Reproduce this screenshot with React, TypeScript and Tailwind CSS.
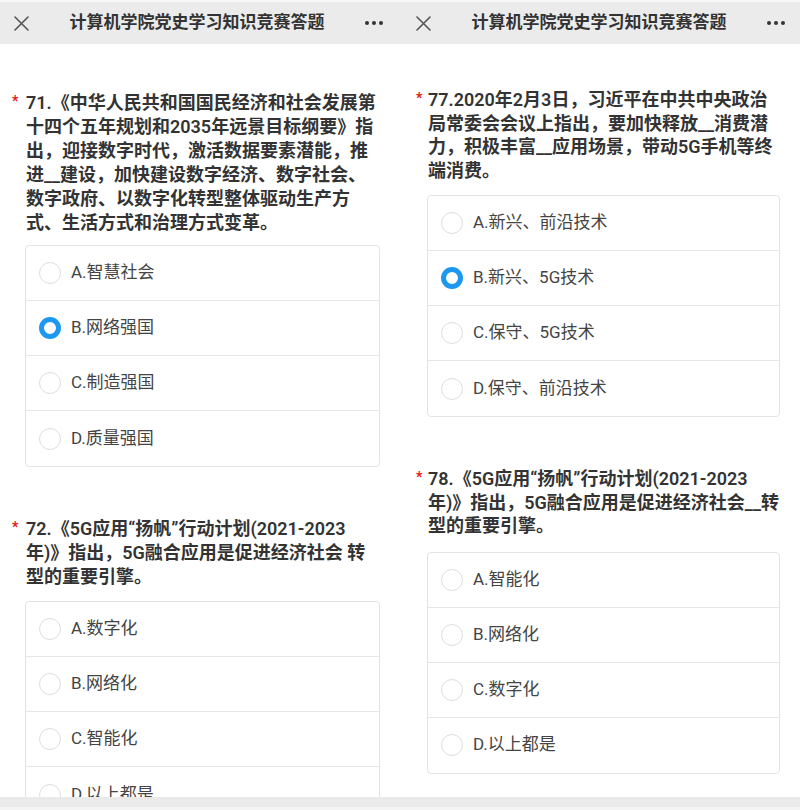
import React from "react";

type Q = {
  lines: string[];
  options: string[];
  selected: number;
  mtText: string;
  mtBox: string;
};

function Header({ pl, pr }: { pl: string; pr: string }) {
  return (
    <div className={`h-[44px] shrink-0 bg-[#ebebeb] border-t-2 border-[#f7f7f7] flex items-center justify-between ${pl} ${pr}`}>
      <svg width="15" height="15" viewBox="0 0 15 15" className="shrink-0">
        <path d="M1 1L14 14M14 1L1 14" stroke="#555" strokeWidth="1.6" strokeLinecap="round" />
      </svg>
      <div className="text-[17px] font-semibold text-[#333]">计算机学院党史学习知识竞赛答题</div>
      <div className="flex items-center gap-[3px] shrink-0">
        <span className="w-[4px] h-[4px] rounded-full bg-[#333]" />
        <span className="w-[4px] h-[4px] rounded-full bg-[#333]" />
        <span className="w-[4px] h-[4px] rounded-full bg-[#333]" />
      </div>
    </div>
  );
}

function Radio({ on }: { on: boolean }) {
  return on ? (
    <span className="w-[22px] h-[22px] rounded-full border-[5px] border-[#1c98f2] bg-white shrink-0" />
  ) : (
    <span className="w-[22px] h-[22px] rounded-full border border-[#dedede] bg-white shrink-0" />
  );
}

function Question({ q, leading, starPad }: { q: Q; leading: string; starPad: string }) {
  return (
    <div>
      <div className={`flex ${q.mtText}`}>
        <span className={`w-[16px] shrink-0 ${starPad} text-[#ee1111] text-[14px] font-bold leading-[20px]`}>*</span>
        <div className={`text-[18px] font-semibold text-[#333] ${leading}`}>
          {q.lines.map((l, i) => (
            <div key={i} className="whitespace-nowrap">{l}</div>
          ))}
        </div>
      </div>
      <div className={`${q.mtBox} ml-[15px] mr-[20px] border border-[#e3e3e3] rounded-[4px] divide-y divide-[#e6e6e6] bg-white`}>
        {q.options.map((o, i) => (
          <div key={i} className="h-[55px] flex items-center pl-[13px] gap-[10px]">
            <Radio on={i === q.selected} />
            <span className="text-[17px] text-[#444]">{o}</span>
          </div>
        ))}
      </div>
    </div>
  );
}

function Panel({ qs, pt, pl, leading, starPad, hpl, hpr }: { qs: Q[]; pt: string; pl: string; leading: string; starPad: string; hpl: string; hpr: string }) {
  return (
    <div className="w-[400px] h-[810px] flex flex-col bg-white">
      <Header pl={hpl} pr={hpr} />
      <div className={`flex-1 overflow-hidden ${pt} ${pl}`}>
        {qs.map((q, i) => (
          <Question key={i} q={q} leading={leading} starPad={starPad} />
        ))}
      </div>
      <div className="h-[13px] shrink-0 bg-[#eaeaea] border-b-[3px] border-[#f4f4f4]" />
    </div>
  );
}

const left: Q[] = [
  {
    lines: [
      "71.《中华人民共和国国民经济和社会发展第",
      "十四个五年规划和2035年远景目标纲要》指",
      "出，迎接数字时代，激活数据要素潜能，推",
      "进__建设，加快建设数字经济、数字社会、",
      "数字政府、以数字化转型整体驱动生产方",
      "式、生活方式和治理方式变革。",
    ],
    options: ["A.智慧社会", "B.网络强国", "C.制造强国", "D.质量强国"],
    selected: 1,
    mtText: "mt-0",
    mtBox: "mt-[10px]",
  },
  {
    lines: [
      "72.《5G应用“扬帆”行动计划(2021-2023",
      "年)》指出，5G融合应用是促进经济社会 转",
      "型的重要引擎。",
    ],
    options: ["A.数字化", "B.网络化", "C.智能化", "D.以上都是"],
    selected: -1,
    mtText: "mt-[50px]",
    mtBox: "mt-[12px]",
  },
];

const right: Q[] = [
  {
    lines: [
      "77.2020年2月3日，习近平在中共中央政治",
      "局常委会会议上指出，要加快释放__消费潜",
      "力，积极丰富__应用场景，带动5G手机等终",
      "端消费。",
    ],
    options: ["A.新兴、前沿技术", "B.新兴、5G技术", "C.保守、5G技术", "D.保守、前沿技术"],
    selected: 1,
    mtText: "mt-0",
    mtBox: "mt-[13px]",
  },
  {
    lines: [
      "78.《5G应用“扬帆”行动计划(2021-2023",
      "年)》指出，5G融合应用是促进经济社会__转",
      "型的重要引擎。",
    ],
    options: ["A.智能化", "B.网络化", "C.数字化", "D.以上都是"],
    selected: -1,
    mtText: "mt-[50px]",
    mtBox: "mt-[14px]",
  },
];

export default function App() {
  return (
    <div className="w-[800px] h-[810px] flex bg-white overflow-hidden font-['Roboto','Noto_Sans_CJK_SC',sans-serif]">
      <Panel qs={left} pt="pt-[47px]" pl="pl-[10px]" leading="leading-[24px]" starPad="pl-[2px]" hpl="pl-[14px]" hpr="pr-[17px]" />
      <Panel qs={right} pt="pt-[44px]" pl="pl-[12px]" leading="leading-[23.5px]" starPad="pl-[4px]" hpl="pl-[16px]" hpr="pr-[15px]" />
    </div>
  );
}
